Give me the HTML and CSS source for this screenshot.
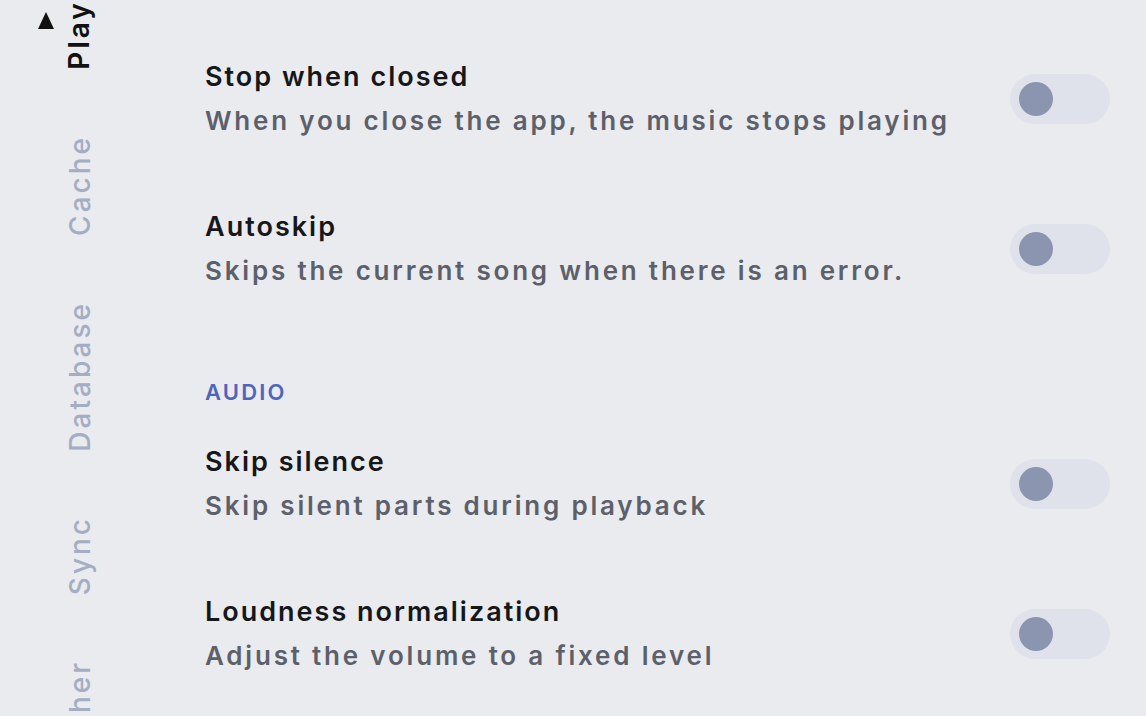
FILE: index.html
```html
<!doctype html>
<html lang="en">
<head>
  <meta charset="UTF-8" />
  <meta name="viewport" content="width=device-width, initial-scale=1.0" />
  <title>Settings</title>
  <link rel="stylesheet" href="styles.css">
</head>
<body>
<div class="screen">
  <nav class="sidebar">
    <div class="tab active">
      <span class="tab-arrow"></span>
      <span class="tab-label">Player</span>
    </div>
    <div class="tab"><span class="tab-label">Cache</span></div>
    <div class="tab"><span class="tab-label">Database</span></div>
    <div class="tab"><span class="tab-label">Sync</span></div>
    <div class="tab"><span class="tab-label">Other</span></div>
  </nav>

  <main class="settings">
    <div class="setting">
      <div class="setting-text">
        <div class="setting-title">Stop when closed</div>
        <div class="setting-desc">When you close the app, the music stops playing</div>
      </div>
      <div class="switch"><span class="knob"></span></div>
    </div>
    <div class="setting">
      <div class="setting-text">
        <div class="setting-title">Autoskip</div>
        <div class="setting-desc">Skips the current song when there is an error.</div>
      </div>
      <div class="switch"><span class="knob"></span></div>
    </div>

    <h3 class="section-title">AUDIO</h3>

    <div class="setting">
      <div class="setting-text">
        <div class="setting-title">Skip silence</div>
        <div class="setting-desc">Skip silent parts during playback</div>
      </div>
      <div class="switch"><span class="knob"></span></div>
    </div>
    <div class="setting">
      <div class="setting-text">
        <div class="setting-title">Loudness normalization</div>
        <div class="setting-desc">Adjust the volume to a fixed level</div>
      </div>
      <div class="switch"><span class="knob"></span></div>
    </div>
  </main>
</div>
</body>
</html>
```

FILE: styles.css
```css
html, body {
  margin: 0;
  padding: 0;
  height: 100%;
  overflow: hidden;
}
body {
  font-family: Inter, "Noto Sans", sans-serif;
  background-color: #e9ebef;
  color: #16171a;
}
.screen {
  display: flex;
  height: 100%;
}
.sidebar {
  width: 205px;
  flex-shrink: 0;
  display: flex;
  flex-direction: column;
  align-items: flex-start;
  gap: 65px;
  padding-left: 38px;
  margin-top: -33px;
  box-sizing: border-box;
}
.tab {
  display: flex;
  align-items: flex-start;
  padding-left: 25px;
}
.tab.active {
  padding-left: 0;
  gap: 8px;
}
.tab-arrow {
  width: 0;
  height: 0;
  margin-top: 45px;
  border-left: 8px solid transparent;
  border-right: 8px solid transparent;
  border-bottom: 17px solid #111;
}
.tab-label {
  writing-mode: vertical-rl;
  transform: rotate(180deg);
  font-size: 28px;
  line-height: 34px;
  font-weight: 500;
  letter-spacing: 3px;
  color: #a5adc3;
}
.tab.active .tab-label {
  color: #111;
  font-weight: 600;
}
.settings {
  flex: 1;
  padding: 24px 36px 0 0;
}
.setting {
  display: flex;
  align-items: center;
  justify-content: space-between;
  padding: 31px 0;
}
.setting-title {
  font-size: 27px;
  line-height: 44px;
  font-weight: 600;
  letter-spacing: 2px;
  color: #16171a;
}
.setting-desc {
  font-size: 26px;
  line-height: 44px;
  font-weight: 600;
  letter-spacing: 2.8px;
  color: #5c606a;
}
.section-title {
  margin: 54px 0 3px;
  font-size: 22px;
  line-height: 28px;
  font-weight: 600;
  letter-spacing: 2.2px;
  color: #4e65bf;
}
.switch {
  width: 100px;
  height: 50px;
  border-radius: 25px;
  background-color: #dfe2ea;
  display: flex;
  align-items: center;
  padding-left: 9px;
  box-sizing: border-box;
}
.knob {
  width: 34px;
  height: 34px;
  border-radius: 50%;
  background-color: #8b95b0;
}
```
